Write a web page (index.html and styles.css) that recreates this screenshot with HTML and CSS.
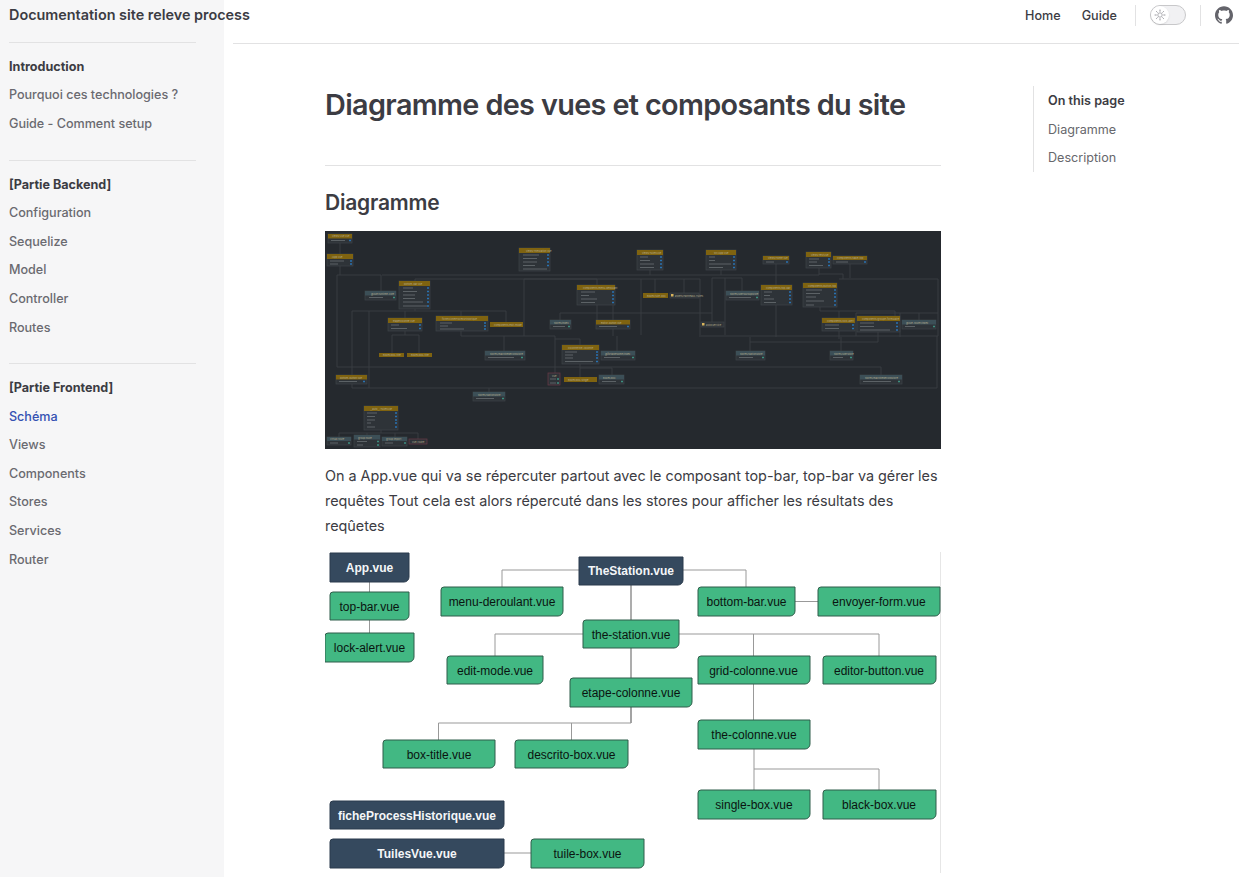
FILE: index.html
```html
<!DOCTYPE html>
<html lang="en">
<head>
<meta charset="UTF-8">
<meta name="viewport" content="width=device-width, initial-scale=1.0">
<title>Diagramme des vues et composants du site | Documentation site releve process</title>
<link rel="stylesheet" href="styles.css">
</head>
<body>
<div class="layout">
    <aside class="sidebar">
        <a class="site-title" href="#">Documentation site releve process</a>
        <nav class="sidebar-group">
            <p class="group-title">Introduction</p>
            <a class="side-link" href="#">Pourquoi ces technologies ?</a>
            <a class="side-link" href="#">Guide - Comment setup</a>
        </nav>
        <nav class="sidebar-group">
            <p class="group-title">[Partie Backend]</p>
            <a class="side-link" href="#">Configuration</a>
            <a class="side-link" href="#">Sequelize</a>
            <a class="side-link" href="#">Model</a>
            <a class="side-link" href="#">Controller</a>
            <a class="side-link" href="#">Routes</a>
        </nav>
        <nav class="sidebar-group">
            <p class="group-title">[Partie Frontend]</p>
            <a class="side-link active" href="#">Schéma</a>
            <a class="side-link" href="#">Views</a>
            <a class="side-link" href="#">Components</a>
            <a class="side-link" href="#">Stores</a>
            <a class="side-link" href="#">Services</a>
            <a class="side-link" href="#">Router</a>
        </nav>
    </aside>

    <div class="page">
        <header class="topbar">
            <a class="top-link" href="#">Home</a>
            <a class="top-link" href="#">Guide</a>
            <span class="top-divider first"></span>
            <button class="theme-switch" aria-label="Switch theme">
                <span class="theme-knob">
                    <svg viewBox="0 0 24 24" width="12" height="12">
                        <circle cx="12" cy="12" r="4.4" fill="none" stroke="#8c8c93" stroke-width="1.4"/>
                        <path d="M12 2v2.500M12 19.500V22M2 12h2.500M19.500 12H22M5 5l1.600 1.600M17.400 17.400L19 19M5 19l1.600-1.600M17.400 6.600L19 5" stroke="#76767e" stroke-width="1.5" stroke-linecap="round"/>
                    </svg>
                </span>
            </button>
            <span class="top-divider"></span>
            <a class="github" href="#" aria-label="GitHub">
                <svg viewBox="0 0 24 24" width="18" height="18">
                    <path fill="#64646b" d="M12 .297c-6.63 0-12 5.373-12 12 0 5.303 3.438 9.8 8.205 11.385.6.113.82-.258.82-.577 0-.285-.01-1.04-.015-2.04-3.338.724-4.042-1.61-4.042-1.61C4.422 18.07 3.633 17.7 3.633 17.7c-1.087-.744.084-.729.084-.729 1.205.084 1.838 1.236 1.838 1.236 1.07 1.835 2.809 1.305 3.495.998.108-.776.417-1.305.76-1.605-2.665-.3-5.466-1.332-5.466-5.93 0-1.31.465-2.38 1.235-3.22-.135-.303-.54-1.523.105-3.176 0 0 1.005-.322 3.3 1.23.96-.267 1.98-.399 3-.405 1.02.006 2.04.138 3 .405 2.28-1.552 3.285-1.23 3.285-1.23.645 1.653.24 2.873.12 3.176.765.84 1.23 1.91 1.23 3.22 0 4.61-2.805 5.625-5.475 5.92.42.36.81 1.096.81 2.22 0 1.606-.015 2.896-.015 3.286 0 .315.21.69.825.57C20.565 22.092 24 17.592 24 12.297c0-6.627-5.373-12-12-12"/>
                </svg>
            </a>
        </header>

        <div class="content">
            <main class="doc">
                <h1>Diagramme des vues et composants du site</h1>
                <h2>Diagramme</h2>

                <svg class="dep-graph" viewBox="0 0 616 218" width="616" height="218">
                    <path class="edge" d="M15 12V23M15 35V44M12 44V136H556V144M12 44H56V60M57 44H494V37M90 48H375V106M90 48V50M199 48V105M199 48H272V54M272 74V89M235 89V82H387M387 91V47H417V60M400 47V104M316 48V104M330 48V62M359 48V62M325 39V44M396 39V44M451 33V54M451 74V106M494 43H518V48M525 33V47M514 48H613V105H376M612 105V157H27V153M164 157V161M27 144V80H181V91M44 80V157M136 80V85M90 78V80M80 87V80M80 100V104H67V122M80 104H94V122M136 100V105H230V142M179 105V120M230 108H255V114M255 133V146M255 137H287V144M292 105V120M288 74V105M425 106V120M516 106V120M514 100V108M425 111H553V101M495 76V80H570V85M514 80V87M594 82V89M531 82V105M575 82V106M531 82H613M56 199V202M14 206V202H93V208M42 202V204M70 202V206"/>

                    <g><rect class="node" x="3" y="3" width="24" height="9"/><rect class="head" x="3" y="3" width="24" height="4.5"/><text class="label" x="7" y="6.4">views/Vue.vue</text><path class="row" d="M6 9.5h14"/><path class="port" d="M24 9.5h2"/></g>
                    <g><rect class="node" x="2" y="23" width="26" height="12"/><rect class="head" x="2" y="23" width="26" height="5"/><text class="label" x="6" y="26.6">./App.vue</text><path class="row" d="M5 30h14M5 33h8"/><path class="port" d="M25 30h2M25 33h2"/></g>
                    <g><rect class="node" x="194" y="17" width="31" height="23"/><rect class="head" x="194" y="17" width="31" height="5"/><text class="label" x="201" y="20.6">views/TheStation.vue</text><path class="row" d="M198 24h16M198 27.500h14M198 31h14M198 34.500h12M198 38h24"/><path class="port" d="M222 24h2M222 27.500h2M222 31h2M222 34.500h2"/></g>
                    <g><rect class="node" x="74" y="50" width="31" height="28"/><rect class="head" x="74" y="50" width="31" height="5"/><text class="label" x="79" y="53.600">bottom-bar.vue</text><path class="row" d="M78 57h10M78 60.500h14M78 64h12M78 67.500h12M78 71h20M78 75h24"/><path class="port" d="M102 57h2M102 60.500h2M102 64h2M102 67.500h2M102 71h2M102 75h2"/></g>
                    <g><rect class="node" x="252" y="54" width="38" height="20"/><rect class="head" x="252" y="54" width="38" height="5"/><text class="label" x="258" y="57.600">components/menu-deroulant</text><path class="row" d="M256 61h14M256 64.500h8M256 68h16M256 71.500h14"/><path class="port" d="M287 61h2M287 64.500h2M287 68h2M287 71.500h2"/></g>
                    <g><rect class="node" x="40" y="60" width="31" height="9"/><rect class="head teal" x="40" y="60" width="31" height="4.500"/><text class="label" x="46" y="63.500">@vue/runtime-core</text><path class="row" d="M44 66.500h14"/><path class="port teal-port" d="M68 66.500h2"/></g>
                    <g><rect class="node" x="63" y="87" width="34" height="13"/><rect class="head" x="63" y="87" width="34" height="5"/><text class="label" x="68" y="90.600">EtapeColonne.vue</text><path class="row" d="M66 94h8M66 97.500h16"/><path class="port" d="M94 94h2M94 97.500h2"/></g>
                    <g><rect class="node" x="111" y="85" width="52" height="15"/><rect class="head" x="111" y="85" width="52" height="5"/><text class="label" x="117" y="88.600">fiche/FicheProcessHistorique</text><path class="row" d="M115 92h12M115 95h8M115 98h24"/><path class="port" d="M159 92h2M159 95h2M159 98h2"/></g>
                    <g><rect class="head" x="165" y="91" width="33" height="5"/><text class="label" x="169" y="94.600">components/edit-mode</text></g>
                    <g><rect class="node" x="225" y="89" width="21" height="9"/><rect class="head teal" x="225" y="89" width="21" height="4.500"/><text class="label" x="229" y="92.500">stores/index</text><path class="row" d="M228 95.500h12"/><path class="port teal-port" d="M243 95.500h2"/></g>
                    <g><rect class="node" x="271" y="89" width="34" height="9"/><rect class="head" x="271" y="89" width="34" height="4.500"/><text class="label" x="276" y="92.500">editor-button.vue</text><path class="row" d="M274 95.500h18"/><path class="port" d="M302 95.500h2"/></g>
                    <g><rect class="head" x="54" y="122" width="25" height="4"/><text class="label" x="58" y="125.200">Boxes/box-title</text></g>
                    <g><rect class="head" x="82" y="122" width="25" height="4"/><text class="label" x="86" y="125.200">Boxes/box-title</text></g>
                    <g><rect class="node" x="160" y="120" width="40" height="9"/><rect class="head teal" x="160" y="120" width="40" height="4.500"/><text class="label" x="165" y="123.500">stores/machineRecordStore</text><path class="row" d="M163 126.500h26"/><path class="port teal-port" d="M196 126.500h2"/></g>
                    <g><rect class="node" x="237" y="114" width="37" height="19"/><rect class="head" x="237" y="114" width="37" height="5"/><text class="label" x="243" y="117.600">Colonne/the-colonne</text><path class="row" d="M240 121h12M240 124h8M240 127h8M240 130.500h28"/><path class="port" d="M271 121h2M271 124h2M271 127h2M271 130.500h2"/></g>
                    <g><rect class="node" x="276" y="120" width="34" height="9"/><rect class="head teal" x="276" y="120" width="34" height="4.500"/><text class="label" x="280" y="123.500">@fortawesome/index</text><path class="row" d="M279 126.500h16"/><path class="port teal-port" d="M307 126.500h2"/></g>
                    <g><rect class="node" x="11" y="144" width="31" height="9"/><rect class="head" x="11" y="144" width="31" height="4.500"/><text class="label" x="15" y="147.500">bottom-button.vue</text><path class="row" d="M14 150.500h18"/><path class="port" d="M38 150.500h2"/></g>
                    <g><rect class="node alert" x="223" y="142" width="12" height="12"/><text class="label" x="227" y="146">vue</text><path class="row" d="M225 148h6M225 152h6"/><path class="port teal-port" d="M232 148h2M232 152h2"/></g>
                    <g><rect class="head" x="239" y="146" width="33" height="5"/><text class="label" x="243" y="149.600">Boxes/box-single</text></g>
                    <g><rect class="node" x="274" y="144" width="25" height="9"/><rect class="head teal" x="274" y="144" width="25" height="4.500"/><text class="label" x="278" y="147.500">Boxes/box</text><path class="row" d="M277 150.500h14"/><path class="port teal-port" d="M296 150.500h2"/></g>
                    <g><rect class="node" x="148" y="161" width="32" height="9"/><rect class="head teal" x="148" y="161" width="32" height="4.500"/><text class="label" x="153" y="164.500">stores/stationStore</text><path class="row" d="M151 167.500h18"/><path class="port teal-port" d="M177 167.500h2"/></g>
                    <g><rect class="node" x="39" y="175" width="34" height="24"/><rect class="head" x="39" y="175" width="34" height="5"/><text class="label" x="45" y="178.600">__auto__/TuilesVue</text><path class="row" d="M42 182h10M42 185.500h8M42 189h8M42 192h4M42 196h8"/><path class="port" d="M70 182h2M70 185.500h2M70 189h2M70 192h2M70 196h2"/></g>
                    <g><rect class="node" x="2" y="206" width="24" height="8"/><rect class="head teal" x="2" y="206" width="24" height="4"/><text class="label" x="5" y="209.200">virtual:route</text><path class="row" d="M5 212h8"/><path class="port teal-port" d="M23 212h2"/></g>
                    <g><rect class="node" x="29" y="204" width="26" height="12"/><rect class="head teal" x="29" y="204" width="26" height="4.500"/><text class="label" x="33" y="207.500">group:route</text><path class="row" d="M32 210.500h10M32 214h6"/><path class="port teal-port" d="M52 210.500h2M52 214h2"/></g>
                    <g><rect class="node" x="57" y="206" width="25" height="9"/><rect class="head teal" x="57" y="206" width="25" height="4"/><text class="label" x="61" y="209.200">group:import</text><path class="row" d="M60 212h8"/><path class="port teal-port" d="M79 212h2"/></g>
                    <g><rect class="node alert" x="84" y="208" width="18" height="5"/><text class="label" x="87" y="211.500">vue-router</text></g>

                    <g><rect class="node" x="312" y="19" width="26" height="20"/><rect class="head" x="312" y="19" width="26" height="5"/><text class="label" x="317" y="22.600">views/TuilesVue</text><path class="row" d="M315 26h8M315 29.500h10M315 33h14M315 36.500h14"/><path class="port" d="M335 26h2M335 29.500h2M335 33h2M335 36.500h2"/></g>
                    <g><rect class="node" x="381" y="19" width="30" height="20"/><rect class="head" x="381" y="19" width="30" height="5"/><text class="label" x="389" y="22.600">src/App.vue</text><path class="row" d="M384 26h6M384 29.500h6M384 33h22M384 36.500h14"/><path class="port" d="M408 26h2M408 29.500h2M408 33h2M408 36.500h2"/></g>
                    <g><rect class="node" x="438" y="25" width="26" height="8"/><rect class="head" x="438" y="25" width="26" height="4"/><text class="label" x="443" y="28.200">views/Home.vue</text><path class="row" d="M441 31h8"/><path class="port" d="M461 31h2"/></g>
                    <g><rect class="node" x="481" y="21" width="25" height="16"/><rect class="head" x="481" y="21" width="25" height="5"/><text class="label" x="486" y="24.600">views/TestVue</text><path class="row" d="M484 28h10M484 31h8M484 34.500h14"/><path class="port" d="M503 28h2M503 31h2M503 34.500h2"/></g>
                    <g><rect class="node" x="508" y="25" width="34" height="8"/><rect class="head" x="508" y="25" width="34" height="4"/><text class="label" x="512" y="28.200">components/table-top</text><path class="row" d="M511 31h12"/><path class="port" d="M539 31h2"/></g>
                    <g><rect class="head" x="318" y="62" width="25" height="5"/><text class="label" x="322" y="65.600">Boxes/tuile-box</text></g>
                    <g><rect class="node" x="345" y="62" width="29" height="5"/><rect class="port-square" x="346" y="63" width="2.500" height="2.500"/><text class="label" x="350" y="65.600">assets/Panneaux-Tuiles</text></g>
                    <g><rect class="node" x="401" y="60" width="33" height="9"/><rect class="head teal" x="401" y="60" width="33" height="4.500"/><text class="label" x="405" y="63.500">stores/usersGroupStore</text><path class="row" d="M404 66.500h22"/><path class="port teal-port" d="M431 66.500h2"/></g>
                    <g><rect class="node" x="436" y="54" width="31" height="20"/><rect class="head" x="436" y="54" width="31" height="5"/><text class="label" x="441" y="57.600">components/top-bar</text><path class="row" d="M439 61h8M439 64.500h6M439 68h10M439 71.500h12"/><path class="port" d="M464 61h2M464 64.500h2M464 68h2M464 71.500h2"/></g>
                    <g><rect class="node" x="478" y="52" width="34" height="24"/><rect class="head" x="478" y="52" width="34" height="5"/><text class="label" x="483" y="55.600">components/button-top</text><path class="row" d="M481 59h16M481 62.500h14M481 66h10M481 70h18M481 74h8"/><path class="port" d="M509 59h2M509 62.500h2M509 66h2M509 70h2M509 74h2"/></g>
                    <g><rect class="node" x="376" y="91" width="23" height="5"/><rect class="port-square" x="377" y="92" width="2.500" height="2.500"/><text class="label" x="381" y="94.600">axiosService</text></g>
                    <g><rect class="node" x="497" y="87" width="33" height="13"/><rect class="head" x="497" y="87" width="33" height="5"/><text class="label" x="502" y="90.600">components/lock-alert</text><path class="row" d="M500 94h14M500 97.500h14"/><path class="port" d="M527 94h2M527 97.500h2"/></g>
                    <g><rect class="node" x="532" y="85" width="43" height="16"/><rect class="head" x="532" y="85" width="43" height="5"/><text class="label" x="537" y="88.600">components/groupe-formulaire</text><path class="row" d="M535 92h14M535 95.500h14M535 99h30"/><path class="port" d="M571 92h2M571 95.500h2M571 99h2"/></g>
                    <g><rect class="node" x="577" y="89" width="34" height="9"/><rect class="head teal" x="577" y="89" width="34" height="4.500"/><text class="label" x="581" y="92.500">@vue-router/index</text><path class="row" d="M580 95.500h10"/><path class="port teal-port" d="M608 95.500h2"/></g>
                    <g><rect class="node" x="411" y="120" width="29" height="9"/><rect class="head teal" x="411" y="120" width="29" height="4.500"/><text class="label" x="415" y="123.500">stores/stationStore</text><path class="row" d="M414 126.500h14"/><path class="port teal-port" d="M437 126.500h2"/></g>
                    <g><rect class="node" x="505" y="120" width="23" height="9"/><rect class="head teal" x="505" y="120" width="23" height="4.500"/><text class="label" x="509" y="123.500">stores/userStore</text><path class="row" d="M508 126.500h10"/><path class="port teal-port" d="M525 126.500h2"/></g>
                    <g><rect class="node" x="535" y="144" width="42" height="9"/><rect class="head teal" x="535" y="144" width="42" height="4.500"/><text class="label" x="540" y="147.500">stores/machineRecordStore</text><path class="row" d="M538 150.500h28"/><path class="port teal-port" d="M573 150.500h2"/></g>
                </svg>

                <p>On a App.vue qui va se répercuter partout avec le composant top-bar, top-bar va gérer les requêtes Tout cela est alors répercuté dans les stores pour afficher les résultats des reqûetes</p>

                <svg class="view-tree" viewBox="325 552 616 321" width="616" height="321">
                    <path class="frame" d="M940.500 552V873"/>
                    <path class="link" d="M369.500 582V592M369.500 620V633M579 570H502V587M583 634H495V656M631 707V723H438.500V740M571.500 723V740M683 570H746V587M795 601.500H818M679 634H879V656M753.500 634V656M753.500 684V720M754 749V790M754 769H879V790M504 853H531"/>
                    <path class="link trunk" d="M631 585V620M631 648V678M631 707V723"/>

                    <path class="box navy" d="M330 553h79v24a5 5 0 0 1-5 5h-74z"/>
                    <text class="box-name light" x="369.500" y="572">App.vue</text>
                    <path class="box navy" d="M579 557h104v23a5 5 0 0 1-5 5h-99z"/>
                    <text class="box-name light" x="631" y="575">TheStation.vue</text>
                    <path class="box navy" d="M333 801h171v23a5 5 0 0 1-5 5h-169v-25a3 3 0 0 1 3-3z"/>
                    <text class="box-name light" x="417" y="820">ficheProcessHistorique.vue</text>
                    <path class="box navy" d="M333 839h171v24a5 5 0 0 1-5 5h-169v-26a3 3 0 0 1 3-3z"/>
                    <text class="box-name light" x="417" y="858">TuilesVue.vue</text>

                    <path class="box" d="M333 592h76v23a5 5 0 0 1-5 5h-74v-25a3 3 0 0 1 3-3z"/>
                    <text class="box-name" x="369.500" y="611">top-bar.vue</text>
                    <path class="box" d="M328 633h86v24a5 5 0 0 1-5 5h-84v-26a3 3 0 0 1 3-3z"/>
                    <text class="box-name" x="369.500" y="652">lock-alert.vue</text>
                    <path class="box" d="M444 587h119v24a5 5 0 0 1-5 5h-117v-26a3 3 0 0 1 3-3z"/>
                    <text class="box-name" x="502" y="606">menu-deroulant.vue</text>
                    <path class="box" d="M586 620h93v23a5 5 0 0 1-5 5h-91v-25a3 3 0 0 1 3-3z"/>
                    <text class="box-name" x="631" y="639">the-station.vue</text>
                    <path class="box" d="M450 656h93v23a5 5 0 0 1-5 5h-91v-25a3 3 0 0 1 3-3z"/>
                    <text class="box-name" x="495" y="675">edit-mode.vue</text>
                    <path class="box" d="M573 678h119v24a5 5 0 0 1-5 5h-117v-26a3 3 0 0 1 3-3z"/>
                    <text class="box-name" x="631" y="697">etape-colonne.vue</text>
                    <path class="box" d="M386 740h109v23a5 5 0 0 1-5 5h-107v-25a3 3 0 0 1 3-3z"/>
                    <text class="box-name" x="439" y="759">box-title.vue</text>
                    <path class="box" d="M518 740h110v23a5 5 0 0 1-5 5h-108v-25a3 3 0 0 1 3-3z"/>
                    <text class="box-name" x="571.500" y="759">descrito-box.vue</text>
                    <path class="box" d="M534 839h110v24a5 5 0 0 1-5 5h-108v-26a3 3 0 0 1 3-3z"/>
                    <text class="box-name" x="587.500" y="858">tuile-box.vue</text>
                    <path class="box" d="M701 587h94v24a5 5 0 0 1-5 5h-92v-26a3 3 0 0 1 3-3z"/>
                    <text class="box-name" x="746.500" y="606">bottom-bar.vue</text>
                    <path class="box" d="M821 587h119v24a5 5 0 0 1-5 5h-117v-26a3 3 0 0 1 3-3z"/>
                    <text class="box-name" x="879" y="606">envoyer-form.vue</text>
                    <path class="box" d="M701 656h109v23a5 5 0 0 1-5 5h-107v-25a3 3 0 0 1 3-3z"/>
                    <text class="box-name" x="753.500" y="675">grid-colonne.vue</text>
                    <path class="box" d="M826 656h110v23a5 5 0 0 1-5 5h-108v-25a3 3 0 0 1 3-3z"/>
                    <text class="box-name" x="879" y="675">editor-button.vue</text>
                    <path class="box" d="M701 720h109v24a5 5 0 0 1-5 5h-107v-26a3 3 0 0 1 3-3z"/>
                    <text class="box-name" x="754" y="739">the-colonne.vue</text>
                    <path class="box" d="M701 790h109v24a5 5 0 0 1-5 5h-107v-26a3 3 0 0 1 3-3z"/>
                    <text class="box-name" x="754" y="809">single-box.vue</text>
                    <path class="box" d="M826 790h110v24a5 5 0 0 1-5 5h-108v-26a3 3 0 0 1 3-3z"/>
                    <text class="box-name" x="879" y="809">black-box.vue</text>
                </svg>
            </main>

            <aside class="toc">
                <p class="toc-title">On this page</p>
                <a class="toc-link" href="#">Diagramme</a>
                <a class="toc-link" href="#">Description</a>
            </aside>
        </div>
    </div>
</div>
</body>
</html>
```

FILE: styles.css
```css
* {
    box-sizing: border-box;
}
html, body {
    height: 100%;
}
body {
    margin: 0;
    font-family: Inter, "Noto Sans", sans-serif;
    color: #3c3c43;
    background-color: #fff;
    overflow: hidden;
}
a {
    color: inherit;
    text-decoration: none;
}
.layout {
    display: flex;
    height: 100%;
}

/* sidebar */
.sidebar {
    flex: 0 0 224px;
    min-width: 0;
    padding: 0 28px 0 9px;
    background-color: #f6f6f7;
}
.site-title {
    display: block;
    height: 42px;
    line-height: 29px;
    font-size: 14.4px;
    font-weight: 600;
    white-space: nowrap;
    color: #3c3c43;
}
.sidebar-group {
    border-top: 1px solid #e2e2e3;
    padding: 9.8px 0 21.2px;
}
.group-title, .side-link {
    display: block;
    margin: 0;
    line-height: 28.6px;
    font-size: 12.6px;
}
.group-title {
    font-weight: 700;
    color: #3c3c43;
}
.side-link {
    font-weight: 500;
    letter-spacing: -0.02px;
    color: #6a6a70;
}
.side-link.active {
    color: #3451b2;
}

/* top nav */
.page {
    flex: 1;
    min-width: 0;
    margin-left: 9px;
}
.topbar {
    display: flex;
    justify-content: flex-end;
    align-items: center;
    height: 44px;
    padding: 3px 6px 16px 0;
    border-bottom: 1px solid #e2e2e3;
}
.top-link {
    margin-left: 21px;
    font-size: 12.6px;
    font-weight: 500;
    color: #3c3c43;
}
.top-divider {
    width: 1px;
    height: 21px;
    margin: 0 14px;
    background-color: #e2e2e3;
}
.top-divider.first {
    margin-left: 18px;
}
.theme-switch {
    width: 36px;
    height: 20px;
    padding: 0;
    border: 1px solid #c8c8ca;
    border-radius: 10px;
    background-color: #f1f1f3;
    display: flex;
    align-items: center;
}
.theme-knob {
    width: 18px;
    height: 18px;
    border-radius: 50%;
    background-color: #fff;
    box-shadow: 0 1px 2px rgba(0, 0, 0, 0.1);
    display: flex;
    align-items: center;
    justify-content: center;
}
.github {
    display: flex;
}

/* main column */
.content {
    display: flex;
    padding: 42px 0 0 92px;
}
.doc {
    width: 616px;
}
h1 {
    margin: 0;
    height: 80px;
    border-bottom: 1px solid #e2e2e3;
    font-size: 28.8px;
    line-height: 38px;
    font-weight: 600;
    letter-spacing: -0.022em;
    color: #3c3c43;
}
h2 {
    margin: 0;
    padding-top: 22px;
    height: 65px;
    font-size: 21px;
    line-height: 30px;
    font-weight: 600;
    letter-spacing: -0.01em;
    color: #3c3c43;
}
p {
    margin: 0;
}
.doc p {
    padding: 14px 0 13.4px;
    font-size: 14.4px;
    line-height: 25.2px;
    letter-spacing: -0.03px;
    color: #3c3c43;
}
.dep-graph, .view-tree {
    display: block;
}
.dep-graph {
    background-color: #25292e;
}
.edge {
    fill: none;
    stroke: #3b4044;
    stroke-width: 0.9;
}
.node {
    fill: #2e3338;
    stroke: #3e4448;
    stroke-width: 0.7;
}
.node.alert {
    stroke: #6b3a48;
}
.head {
    fill: #7f6310;
}
.head.teal {
    fill: #3c4f57;
}
.label {
    font-size: 2.5px;
    fill: #b5ac8e;
}
.row {
    fill: none;
    stroke: #5c6266;
    stroke-width: 1;
}
.port {
    fill: none;
    stroke: #2a72b0;
    stroke-width: 1.4;
}
.teal-port {
    stroke: #3d8f80;
}
.port-square {
    fill: #d8b45c;
}
.view-tree {
    background-color: #fff;
}
.frame {
    fill: none;
    stroke: #e6e6e6;
    stroke-width: 1;
}
.link {
    fill: none;
    stroke: #999;
    stroke-width: 1;
}
.link.trunk {
    stroke-width: 1.6;
}
.box {
    fill: #42b883;
    stroke: #2f5d4a;
    stroke-width: 1;
}
.box.navy {
    fill: #35495e;
    stroke: #2b3b4c;
}
.box-name {
    font-family: "Liberation Sans", Arial, sans-serif;
    font-size: 12px;
    text-anchor: middle;
    fill: #0a1410;
}
.box-name.light {
    font-weight: 700;
    fill: #f4f6f8;
}

/* right toc */
.toc {
    margin: 0 0 0 92px;
    padding: 1px 0 0 14px;
    height: 86px;
    border-left: 1px solid #e2e2e3;
}
.toc-title, .toc-link {
    display: block;
    line-height: 28.6px;
    font-size: 12.6px;
    white-space: nowrap;
}
.toc-title {
    font-weight: 600;
    color: #3c3c43;
}
.toc-link {
    font-weight: 400;
    color: #67676c;
}
```
